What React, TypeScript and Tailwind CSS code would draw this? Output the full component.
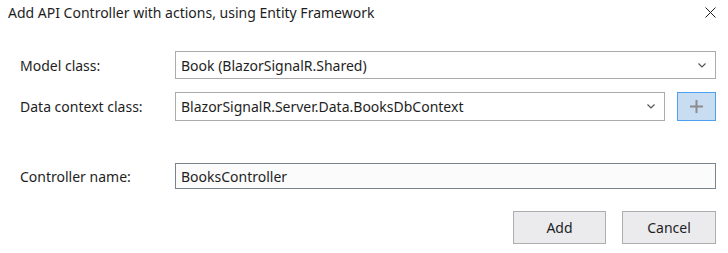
import React from "react";

function Chevron() {
  return (
    <svg width="8" height="5" viewBox="0 0 8 5" className="block">
      <path d="M0.5 0.5 L4 4 L7.5 0.5" fill="none" stroke="#555" strokeWidth="1.2" />
    </svg>
  );
}

export default function App() {
  const font = { fontFamily: '"Noto Sans", "Open Sans", sans-serif' };
  return (
    <div className="w-[728px] h-[253px] bg-white text-[#1e1e1e] relative overflow-hidden" style={font}>
      <div className="flex items-start justify-between pl-[8px] pr-[12px] pt-[3px] h-[40px]">
        <div className="text-[14px] leading-[20px]">Add API Controller with actions, using Entity Framework</div>
        <svg width="11" height="11" viewBox="0 0 11 11" className="mt-[4px]">
          <path d="M0.5 0.5 L10.5 10.5 M10.5 0.5 L0.5 10.5" stroke="#1e1e1e" strokeWidth="1" />
        </svg>
      </div>
      <div className="pl-[20px] pr-[12px] pt-[11px] flex flex-col">
        <div className="flex items-center h-[28px]">
          <div className="w-[155px] text-[14px]">Model class:</div>
          <div className="flex-1 h-[28px] border border-[#ababab] flex items-center justify-between pl-[5px] pr-[9px] text-[14px]">
            <span>Book (BlazorSignalR.Shared)</span>
            <Chevron />
          </div>
        </div>
        <div className="flex items-center h-[29px] mt-[13px]">
          <div className="w-[155px] text-[14px]">Data context class:</div>
          <div className="w-[490px] h-[29px] border border-[#ababab] flex items-center justify-between pl-[5px] pr-[9px] text-[14px]">
            <span>BlazorSignalR.Server.Data.BooksDbContext</span>
            <Chevron />
          </div>
          <div className="ml-[12px] w-[39px] h-[29px] border border-[#4d9fef] bg-[#c9ddf2] flex items-center justify-center">
            <svg width="13" height="13" viewBox="0 0 13 13">
              <path d="M6.5 0 V13 M0 6.5 H13" stroke="#8c8c8c" strokeWidth="2" />
            </svg>
          </div>
        </div>
        <div className="flex items-center h-[26px] mt-[42px]">
          <div className="w-[155px] text-[14px]">Controller name:</div>
          <div className="flex-1 h-[26px] border border-[#7a8491] bg-[#fbfbfb] flex items-center pl-[5px] text-[14px]">
            BooksController
          </div>
        </div>
        <div className="flex justify-end gap-[16px] mt-[22px]">
          <button className="w-[93px] h-[33px] border border-[#adadad] bg-[#ebebee] text-[14px]">Add</button>
          <button className="w-[94px] h-[33px] border border-[#adadad] bg-[#ebebee] text-[14px]">Cancel</button>
        </div>
      </div>
    </div>
  );
}
